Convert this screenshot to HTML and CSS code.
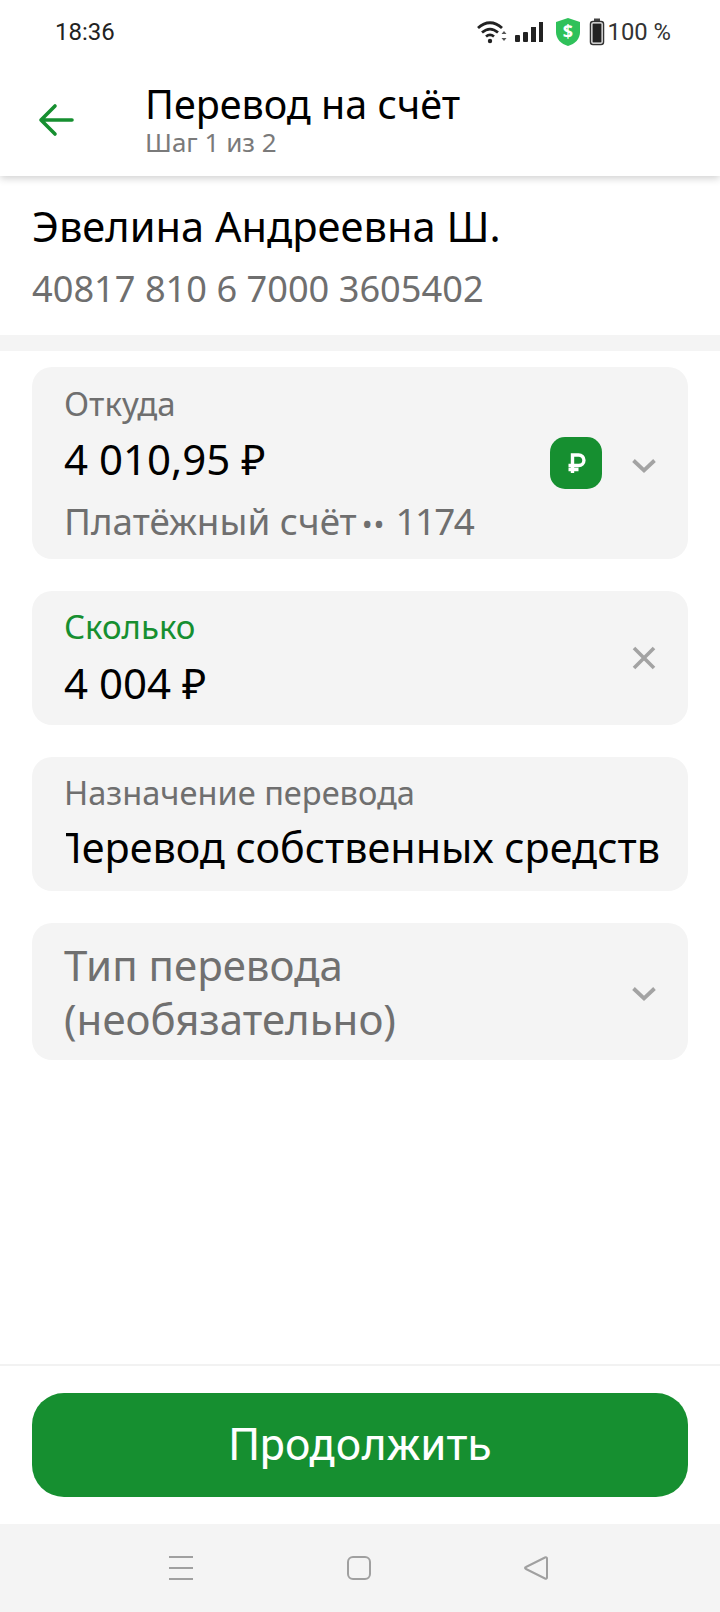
FILE: index.html
```html
<!DOCTYPE html>
<html lang="ru">
<head>
<meta charset="utf-8">
<title>Перевод на счёт</title>
<link rel="stylesheet" href="styles.css">
</head>
<body>
<div class="screen">
  <header class="top">
    <div class="status">
      <span class="time">18:36</span>
      <div class="status-icons">
        <svg class="i-wifi" width="30" height="24" viewBox="0 0 30 24"><path d="M1 8C8.500 1 17.500 1 25 8M5 12.500c5.500-4.700 10.500-4.700 16 0M9 16.500c3-2.400 5-2.400 8 0" fill="none" stroke="#222" stroke-width="2.800"/><circle cx="13" cy="21" r="2.200" fill="#222"/><path d="M27 11l2.500 3h-5zM27 21l-2.500-3h5z" fill="#555"/></svg>
        <svg class="i-signal" width="30" height="22" viewBox="0 0 30 22"><rect x="1" y="14" width="5" height="7" rx="1" fill="#222"/><rect x="9" y="11" width="5" height="10" rx="1" fill="#222"/><rect x="17" y="6" width="5" height="15" fill="#222"/><rect x="25" y="1" width="4" height="20" fill="#222"/></svg>
        <svg class="i-shield" width="28" height="30" viewBox="0 0 28 30"><path d="M14 1l12 4v10c0 7-5 12-12 14C7 27 2 22 2 15V5z" fill="#2fc15a"/><text x="14" y="21" text-anchor="middle" class="shield-text">$</text></svg>
        <svg class="i-batt" width="16" height="28" viewBox="0 0 16 28"><rect x="5" y="0.500" width="6" height="3" fill="#444"/><rect x="1.500" y="3.500" width="13" height="23" rx="2.500" fill="#fff" stroke="#333" stroke-width="1.500"/><rect x="3.500" y="5.500" width="9" height="19" fill="#222"/></svg>
        <span class="batt-text">100 %</span>
      </div>
    </div>
    <div class="appbar">
      <svg class="back" width="36" height="36" viewBox="0 0 36 36"><path d="M34 18H3M17 4L3 18l14 14" fill="none" stroke="#168f30" stroke-width="3.600" stroke-linecap="round" stroke-linejoin="round"/></svg>
      <div class="titles">
        <div class="title">Перевод на счёт</div>
        <div class="subtitle">Шаг 1 из 2</div>
      </div>
    </div>
  </header>

  <section class="payee">
    <div class="payee-name">Эвелина Андреевна Ш.</div>
    <div class="payee-acc">40817 810 6 7000 3605402</div>
  </section>
  <div class="band"></div>

  <main class="form">
    <div class="card card-from">
      <div class="col">
        <div class="label">Откуда</div>
        <div class="value">4 010,95 ₽</div>
        <div class="note">Платёжный счёт<span class="dots">••</span><span class="acct-tail">1174</span></div>
      </div>
      <div class="badge">
        <svg width="26" height="26" viewBox="0 0 26 26"><path d="M9.500 23V5h6.200a4.800 4.800 0 0 1 0 10.500H5.500M5.500 19.500h10" fill="none" stroke="#fff" stroke-width="3.400"/></svg>
      </div>
      <svg class="chev" width="24" height="24" viewBox="0 0 24 24"><path d="M1.500 7.500L12 17.500l10.500-10" fill="none" stroke="#a3a3a3" stroke-width="3.800"/></svg>
    </div>

    <div class="card card-sum">
      <div class="col">
        <div class="label label-green">Сколько</div>
        <div class="value">4 004 ₽</div>
      </div>
      <svg class="chev" width="24" height="24" viewBox="0 0 24 24"><path d="M2 2l20 20M22 2L2 22" fill="none" stroke="#a3a3a3" stroke-width="3.600"/></svg>
    </div>

    <div class="card card-purpose">
      <div class="label label-purpose">Назначение перевода</div>
      <div class="scroller"><span class="scroller-text">Перевод собственных средств</span></div>
    </div>

    <div class="card card-type">
      <div class="placeholder">Тип перевода<br>(необязательно)</div>
      <svg class="chev" width="24" height="24" viewBox="0 0 24 24"><path d="M1.500 7.500L12 17.500l10.500-10" fill="none" stroke="#a3a3a3" stroke-width="3.800"/></svg>
    </div>
  </main>

  <footer class="footer">
    <button class="cta">Продолжить</button>
  </footer>

  <nav class="navbar">
    <svg width="24" height="24" viewBox="0 0 24 24"><path d="M0 1h24M0 12h24M0 23h24" stroke="#a0a0a0" stroke-width="2"/></svg>
    <svg width="24" height="24" viewBox="0 0 24 24"><rect x="1" y="1" width="22" height="22" rx="5" fill="none" stroke="#a0a0a0" stroke-width="2"/></svg>
    <svg width="24" height="24" viewBox="0 0 24 24"><path d="M23 2.500v19c0 1-1 1.500-2 1L2 13c-1.300-.6-1.300-1.400 0-2L21 1.500c1-.5 2 0 2 1z" fill="none" stroke="#a0a0a0" stroke-width="2"/></svg>
  </nav>
</div>
</body>
</html>
```
FILE: styles.css
```css
* { box-sizing: border-box; }
html, body { margin: 0; padding: 0; background: #fff; }
body { font-family: "Noto Sans", sans-serif; color: #000; }
.screen { width: 720px; height: 1612px; display: flex; flex-direction: column; overflow: hidden; }

.top { height: 176px; background: #fff; box-shadow: 0 2px 8px rgba(0,0,0,.2); position: relative; z-index: 1; flex: none; }
.status { height: 64px; display: flex; align-items: center; justify-content: space-between; padding: 0 49px 0 55px; }
.time { font: 400 24px Roboto, sans-serif; color: #222; }
.status-icons { display: flex; align-items: center; }
.batt-text { font: 400 23.800px Roboto, sans-serif; color: #333; margin-left: 3px; }
.shield-text { font: 700 18px "Noto Sans", sans-serif; fill: #fff; }
.i-signal { margin-left: 7px; }
.i-shield { margin-left: 10px; }
.i-batt { margin-left: 7px; }
.appbar { height: 112px; display: flex; align-items: flex-start; padding-left: 38px; }
.back { margin-top: 38px; flex: none; }
.titles { margin-left: 71px; margin-top: 18px; }
.title { font-size: 39.500px; line-height: 44px; }
.subtitle { font-size: 26px; line-height: 32px; color: #7a7a7a; }

.payee { height: 159px; padding: 24px 32px 0; flex: none; }
.payee-name { font-size: 41.600px; line-height: 52px; }
.payee-acc { font-size: 36.200px; line-height: 48px; margin-top: 12px; color: #6f6f6f; }
.band { height: 16px; background: #f4f4f4; flex: none; }

.form { flex: 1; padding: 16px 32px 0; display: flex; flex-direction: column; gap: 32px; }
.card { background: #f4f4f4; border-radius: 20px; padding: 0 32px; display: flex; align-items: center; flex: none; }
.col { flex: 1; }
.card-from { height: 192px; }
.card-from .col { padding-top: 4px; }
.card-sum { height: 134px; }
.card-sum .col { padding-top: 2px; }
.card-purpose { height: 134px; display: block; padding-top: 16px; }
.card-type { height: 137px; }
.label { font-size: 33px; line-height: 40px; color: #6f6f6f; }
.label-purpose { font-size: 32.600px; }
.label-green { color: #168f30; }
.value { font-size: 42px; line-height: 56px; margin-top: 7px; }
.card-sum .value { margin-top: 8px; }
.note { font-size: 36.800px; line-height: 46px; color: #6f6f6f; margin-top: 11px; }
.dots { font-size: 29px; margin-left: 5px; letter-spacing: 1px; }
.acct-tail { margin-left: 10px; letter-spacing: -1.600px; }
.badge { width: 52px; height: 52px; border-radius: 15px; background: #168f30; display: flex; align-items: center; justify-content: center; margin-right: 30px; }
.chev { flex: none; }
.card-from .chev { margin-top: 4px; }
.card-type .chev { margin-top: 2px; }
.scroller { display: flex; justify-content: flex-end; overflow: hidden; margin: 6px 0 0 2px; width: 594px; }
.scroller-text { font-size: 41.300px; line-height: 56px; white-space: nowrap; flex: none; }
.placeholder { flex: 1; font-size: 42px; line-height: 54px; color: #707070; }

.footer { height: 160px; flex: none; border-top: 2px solid #f2f2f2; padding: 27px 32px 0; }
.cta { display: block; width: 100%; height: 104px; border: 0; border-radius: 32px; background: #168f30; color: #fff; font: 400 44.500px Roboto, sans-serif; }

.navbar { height: 88px; background: #f4f4f4; flex: none; display: flex; justify-content: space-between; align-items: center; padding: 0 172px 0 169px; }
```
